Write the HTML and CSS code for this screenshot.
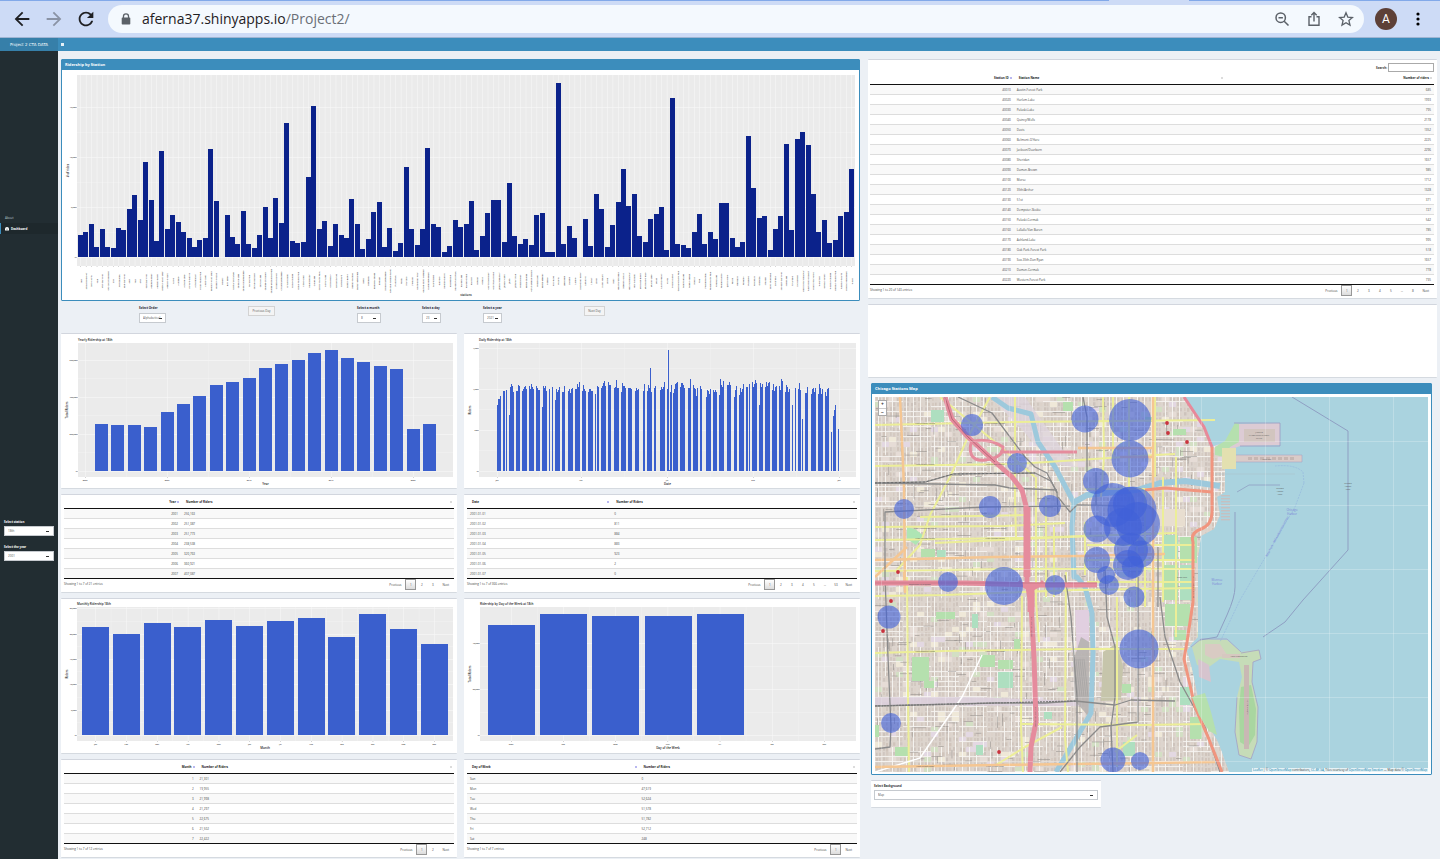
FILE: index.html
```html
<!DOCTYPE html>
<html lang="en">
<head>
  <meta charset="utf-8">
  <title>Project 2 CTA DATA</title>
  <link rel="stylesheet" href="styles.css">
</head>
<body>
  <header class="browser">
    <div class="tab-edge"><span></span></div>
    <div class="toolbar">
      <button class="nav-btn" aria-label="Back"><svg width="22" height="22" viewBox="0 0 24 24"><path d="M20 11H7.83l5.59-5.59L12 4l-8 8 8 8 1.41-1.41L7.83 13H20v-2z"/></svg></button>
      <button class="nav-btn off" aria-label="Forward"><svg width="22" height="22" viewBox="0 0 24 24"><path d="M4 11h12.17l-5.59-5.59L12 4l8 8-8 8-1.41-1.41L16.17 13H4v-2z"/></svg></button>
      <button class="nav-btn" aria-label="Reload"><svg width="22" height="22" viewBox="0 0 24 24"><path d="M17.65 6.35C16.2 4.9 14.21 4 12 4c-4.42 0-7.99 3.58-7.99 8s3.57 8 7.99 8c3.73 0 6.84-2.55 7.73-6h-2.08c-.82 2.33-3.04 4-5.65 4-3.31 0-6-2.69-6-6s2.69-6 6-6c1.66 0 3.14.69 4.22 1.78L13 11h7V4l-2.35 2.35z"/></svg></button>
      <div class="omnibox">
        <svg width="10" height="12" viewBox="0 0 10 12"><path d="M1.800 4.500V3.400a3.200 3.200 0 0 1 6.400 0v1.100H8.500a.8.800 0 0 1 .8.800v5.400a.8.800 0 0 1-.8.800h-7a.8.800 0 0 1-.8-.8V5.300a.8.800 0 0 1 .8-.8zM3.100 4.500h3.800V3.400a1.900 1.900 0 0 0-3.800 0z" fill="#5b6168"/></svg>
        <div class="url">aferna37.shinyapps.io<span>/Project2/</span></div>
        <button aria-label="Zoom"><svg width="16" height="16" viewBox="0 0 16 16" fill="none" stroke="#5b6168" stroke-width="1.500"><circle cx="6.700" cy="6.700" r="4.700"/><path d="M10.200 10.200l4.300 4.300M4.500 6.700h4.400"/></svg></button>
        <button aria-label="Share"><svg width="16" height="16" viewBox="0 0 16 16" fill="none" stroke="#5b6168" stroke-width="1.400"><path d="M5.500 5.700H3v8.600h10V5.700h-2.500M8 10.500V1.800M5.300 4.300L8 1.600l2.700 2.700"/></svg></button>
        <button aria-label="Bookmark"><svg width="16" height="16" viewBox="0 0 16 16" fill="none" stroke="#5b6168" stroke-width="1.300"><path d="M8 1.800l1.800 4.300 4.600.4-3.500 3 1.100 4.600L8 11.700l-4 2.400 1.100-4.600-3.500-3 4.600-.4z"/></svg></button>
      </div>
      <div class="avatar">A</div>
      <button class="dots" aria-label="Menu"><svg width="4" height="14" viewBox="0 0 4 14"><circle cx="2" cy="2" r="1.600"/><circle cx="2" cy="7" r="1.600"/><circle cx="2" cy="12" r="1.600"/></svg></button>
    </div>
  </header>

  <div class="navbar">
    <a class="logo" href="#">Project 2 CTA DATA</a>
    <a class="toggle" href="#" aria-label="Toggle navigation"></a>
  </div>

  <div class="wrapper">
    <aside class="sidebar">
      <ul class="menu">
        <li><a href="#">About</a></li>
        <li class="active"><a href="#"><svg width="4" height="4" viewBox="0 0 4 4"><path d="M0 3.500V2a2 2 0 0 1 4 0v1.500z" fill="#fff"/><path d="M2 3V1.500" stroke="#222d32" stroke-width=".5"/></svg>Dashboard</a></li>
      </ul>
      <div class="side-field">
        <label for="station">Select station</label>
        <select id="station"><option>18th</option></select>
      </div>
      <div class="side-field">
        <label for="sideYear">Select the year</label>
        <select id="sideYear"><option>2001</option></select>
      </div>
    </aside>

    <main class="content">
      <section class="left">
        <div class="box primary">
          <h3>Ridership by Station</h3>
          <svg class="chart" id="stationChart"></svg>
        </div>

        <div class="filters">
          <div class="field order">
            <label for="order">Select Order</label>
            <select id="order"><option>Alphabetical</option></select>
          </div>
          <div class="step prev"><button>Previous Day</button></div>
          <div class="field month">
            <label for="month">Select a month</label>
            <select id="month"><option>8</option></select>
          </div>
          <div class="field">
            <label for="day">Select a day</label>
            <select id="day"><option>23</option></select>
          </div>
          <div class="field">
            <label for="year">Select a year</label>
            <select id="year"><option>2021</option></select>
          </div>
          <div class="step"><button>Next Day</button></div>
        </div>

        <div class="pair">
          <div class="box"><svg class="chart" id="yearChart"></svg></div>
          <div class="box"><svg class="chart" id="dayChart"></svg></div>
          <div class="box table-box">
            <table id="yearTable">
              <colgroup><col class="c-year"><col></colgroup>
              <thead><tr><th class="num sorted">Year</th><th>Number of Riders</th></tr></thead>
              <tbody></tbody>
            </table>
            <div class="foot"><span>Showing 1 to 7 of 21 entries</span><nav data-pages="1 2 3"></nav></div>
          </div>
          <div class="box table-box">
            <table id="dayTable">
              <colgroup><col class="c-day"><col></colgroup>
              <thead><tr><th class="sorted">Date</th><th>Number of Riders</th></tr></thead>
              <tbody></tbody>
            </table>
            <div class="foot"><span>Showing 1 to 7 of 366 entries</span><nav data-pages="1 2 3 4 5 … 53"></nav></div>
          </div>
          <div class="box"><svg class="chart" id="monthChart"></svg></div>
          <div class="box"><svg class="chart" id="weekChart"></svg></div>
          <div class="box table-box">
            <table id="monthTable">
              <colgroup><col class="c-month"><col></colgroup>
              <thead><tr><th class="num sorted">Month</th><th>Number of Riders</th></tr></thead>
              <tbody></tbody>
            </table>
            <div class="foot"><span>Showing 1 to 7 of 12 entries</span><nav data-pages="1 2"></nav></div>
          </div>
          <div class="box table-box">
            <table id="weekTable">
              <colgroup><col class="c-week"><col></colgroup>
              <thead><tr><th class="sorted">Day of Week</th><th>Number of Riders</th></tr></thead>
              <tbody></tbody>
            </table>
            <div class="foot"><span>Showing 1 to 7 of 7 entries</span><nav data-pages="1"></nav></div>
          </div>
        </div>
      </section>

      <section class="right">
        <div class="box stations">
          <div class="search"><label for="search">Search:</label><input type="search" id="search"></div>
          <table id="stationTable">
            <colgroup><col class="c-id"><col class="c-name"><col></colgroup>
            <thead><tr><th class="num sorted">Station ID</th><th>Station Name</th><th class="num">Number of riders</th></tr></thead>
            <tbody></tbody>
          </table>
          <div class="foot"><span>Showing 1 to 20 of 143 entries</span><nav data-pages="1 2 3 4 5 … 8"></nav></div>
        </div>
        <div class="box blank"></div>
        <div class="map-col">
          <div class="box primary">
            <h3>Chicago Stations Map</h3>
            <div class="map">
              <svg id="map" viewBox="0 0 553 375"></svg>
              <div class="zoom"><button aria-label="Zoom in">+</button><button aria-label="Zoom out">−</button></div>
              <div class="credit"><a href="#">Leaflet</a> | © <a href="#">OpenStreetMap</a> contributors, <a href="#">CC-BY-SA</a>, Tiles courtesy of <a href="#">OpenStreetMap Sweden</a> — Map data © <a href="#">OpenStreetMap</a></div>
            </div>
          </div>
          <div class="box background">
            <label for="background">Select Background</label>
            <select id="background"><option>Map</option></select>
          </div>
        </div>
      </section>
    </main>
  </div>
  <script src="app.js"></script>
</body>
</html>
```
FILE: styles.css
```css
* { box-sizing: border-box; }
body {
  margin: 0;
  min-height: 100vh;
  display: flex;
  flex-direction: column;
  background: #ecf0f5;
  color: #333;
  font: 3px/4px "Open Sans", sans-serif;
}
button, input, select { font: inherit; color: inherit; margin: 0; padding: 0; border: 0; background: none; }
a { color: inherit; text-decoration: none; }
svg { display: block; }

/* browser bar */
.browser { background: #cddbf6; border-bottom: 1px solid #9fb5d3; }
.tab-edge { height: 1px; background: #82a9e9; display: flex; }
.tab-edge span { width: 80px; margin-left: 77%; background: #cddbf6; }
.toolbar { display: flex; align-items: center; height: 36px; padding: 0 10px 0 6px; }
.nav-btn { width: 32px; height: 32px; display: flex; align-items: center; justify-content: center; fill: #1f2023; }
.nav-btn.off { fill: #8a93a5; }
.omnibox {
  flex: 1;
  display: flex;
  align-items: center;
  height: 28px;
  margin-left: 6px;
  padding: 0 2px 0 13px;
  border-radius: 14px;
  background: #f4f9fe;
}
.url { flex: 1; margin-left: 11px; color: #1f2023; font: 14px/20px "Open Sans", sans-serif; }
.url span { color: #6a6f76; }
.omnibox button { width: 32px; height: 28px; display: flex; align-items: center; justify-content: center; }
.avatar {
  width: 22px;
  height: 22px;
  margin: 0 9px 0 11px;
  border-radius: 50%;
  background: #5d4037;
  color: #fff;
  font: 12px/22px Roboto, sans-serif;
  text-align: center;
}
.dots { width: 24px; height: 24px; display: flex; align-items: center; justify-content: center; }

/* dashboard header */
.navbar { display: flex; height: 13px; background: #3c8dbc; }
.logo { width: 58px; background: #367fa9; color: #fff; font: 4px/13px "DejaVu Sans", sans-serif; text-align: center; }
.toggle { width: 3px; height: 3px; margin: 5px 3px; background: #e4f0f7; }

.wrapper { flex: 1; display: flex; }
.sidebar { width: 58px; background: #222d32; color: #fff; }
.menu { list-style: none; margin: 0; padding: 161px 0 286px; }
.menu a { display: flex; align-items: center; gap: 2px; height: 11px; padding-left: 4px; border-left: 1px solid transparent; color: #b8c7ce; }
.menu .active a { background: #1e282c; border-left-color: #3c8dbc; color: #fff; font-weight: bold; }
.side-field { padding: 0 4px; margin-bottom: 9px; }
label { display: block; font-weight: bold; white-space: nowrap; }
.side-field label { margin-bottom: 2px; }

select {
  display: block;
  height: 10px;
  padding: 0 3px;
  border: 1px solid #c6cacf;
  background: #fff linear-gradient(#333, #333) no-repeat right 4px center / 3px 1px;
  color: #555;
  font-size: 3px;
  appearance: none;
}
.side-field select { width: 100%; }

/* layout */
.content {
  flex: 1;
  display: grid;
  grid-template-columns: 799fr 569fr;
  gap: 8px;
  align-items: start;
  padding: 8px 3px 1px;
}
.left, .right { min-width: 0; }
.pair { display: grid; grid-template-columns: 1fr 1fr; gap: 5px 7px; }
.box { background: #fff; border-top: 1px solid #d2d6de; border-bottom: 1px solid #d5dae0; border-radius: 1px; }
.box.primary { border: 1px solid #3c8dbc; }
.box h3 { margin: 0; padding-left: 3px; background: #3c8dbc; color: #fff; font: bold 4px/10px "Open Sans", sans-serif; }

.filters { display: grid; grid-template-columns: 109fr 109fr 65fr 61fr 101fr 276fr; height: 32px; padding: 5px 0 0 78px; }
.field label { margin-bottom: 3px; color: #223; }
.field select { width: 19px; background-position: right 3px center; }
.field.order select { width: 27px; background-position: right 3px center; }
.field.month select { width: 24px; background-position: right 4px center; }
.step button { width: 21px; height: 10px; border: 1px solid #d3d3d3; background: #f4f4f4; color: #555; }
.step.prev button { width: 27px; }

/* charts */
.chart { width: 100%; height: auto; }
.chart text { font-family: "Open Sans", sans-serif; fill: #333; }
.chart .tick { font-size: 2px; font-weight: 600; }
.chart .axis { font-size: 3px; font-weight: 600; fill: #222; }

/* tables */
.table-box { padding: 1px 3px 0; }
table { width: 100%; border-spacing: 0; table-layout: fixed; }
th { height: 13px; padding: 0 5px; border-bottom: 1px solid #111; color: #222; line-height: 4px; text-align: left; position: relative; }
th::after { content: ""; position: absolute; right: 2px; top: 5px; width: 2px; height: 2px; background: #dcdcdc; }
th.sorted::after { background: #b9b8f0; }
td { height: 10px; padding: 0 3px; border-bottom: 1px solid #ddd; line-height: 4px; color: #444; }
.num { text-align: right; }
tbody tr:nth-child(odd) { background: #f9f9f9; }
tbody tr:last-child td { border-bottom-color: #111; }
.c-year { width: 30%; }
.c-month { width: 34%; }
.c-day { width: 37%; }
.c-week { width: 44%; }
.c-id { width: 25.5%; }
.c-name { width: 37.5%; }
.foot { display: flex; justify-content: space-between; height: 13px; color: #444; }
.foot span { padding-top: 3px; }
nav { display: flex; }
nav button { min-width: 11px; height: 11px; padding: 0 4px; }
nav .num-btn { padding: 0; }
nav .current { border: 1px solid #979797; background: linear-gradient(#fff, #dcdcdc); }

.stations { padding: 3px 3px 0 2px; }
.stations nav, .table-box nav { margin-right: 1px; }
.search { display: flex; justify-content: flex-end; align-items: center; gap: 1px; height: 9px; }
.search input { width: 46px; height: 9px; border: 1px solid #aaa; background: #fff; }
.blank { height: 74px; margin: 5px 0; }

/* map */
.map-col { padding: 0 5px 0 3px; }
.map { position: relative; margin: 3px 3px 2px; }
.map > svg { width: 100%; height: auto; }
.zoom { position: absolute; left: 3px; top: 3px; border: 1px solid #aaa; background: #fff; }
.zoom button { display: block; width: 7px; height: 7px; font: bold 5px/7px "Open Sans", sans-serif; text-align: center; }
.zoom button + button { border-top: 1px solid #ccc; }
.credit { position: absolute; right: 0; bottom: 0; padding: 0 1px; background: rgba(255, 255, 255, .7); white-space: nowrap; }
.credit a { color: #0078a8; }
#map text { font: 2px "Open Sans", sans-serif; fill: #555; }
#map .lake { font-size: 3px; fill: #7c86d8; }
.background { width: 41%; height: 28px; margin-top: 5px; padding: 3px; }
.background label { margin-bottom: 2px; }
.background select { width: 100%; }
```
FILE: app.js
```js
function el(tag, attrs, text) {
  const node = document.createElementNS("http://www.w3.org/2000/svg", tag);
  for (const key in attrs) node.setAttribute(key, attrs[key]);
  if (text !== undefined) node.textContent = text;
  return node;
}

function rect(svg, x, y, width, height, fill) {
  svg.appendChild(el("rect", { x, y, width, height, fill }));
}

// panel = [x, y, w, h], xTicks / yTicks = [[position, label], ...]
function drawChart(id, c) {
  const svg = document.getElementById(id);
  const [px, py, pw, ph] = c.panel;
  svg.setAttribute("viewBox", `0 0 ${c.width} ${c.height}`);
  rect(svg, px, py, pw, ph, "#ebebeb");
  c.yTicks.forEach(([y, label], i) => {
    rect(svg, px, y, pw, 0.5, "#fafafa");
    if (i) rect(svg, px, (y + c.yTicks[i - 1][0]) / 2, pw, 0.3, "#f8f8f8");
    rect(svg, px - 1, y, 1, 0.5, "#999");
    svg.appendChild(el("text", { class: "tick", x: px - 1, y: y + 1, "text-anchor": "end" }, label));
  });
  c.xTicks.forEach(([x, label], i) => {
    rect(svg, x, py, 0.5, ph, "#f8f8f8");
    if (i && !c.vertical) rect(svg, (x + c.xTicks[i - 1][0]) / 2, py, 0.3, ph, "#f5f5f5");
    rect(svg, x, py + ph, 0.5, 1, "#aaa");
    const t = el("text", { class: "tick", x, y: py + ph + 4, "text-anchor": "middle" }, label);
    if (c.vertical) {
      t.setAttribute("y", 211);
      t.setAttribute("transform", `rotate(-90 ${x} 211)`);
      t.setAttribute("dy", 1);
    }
    svg.appendChild(t);
  });
  c.bars.forEach(([x, h]) => rect(svg, x, c.base - h, c.barWidth, h, c.fill || "#3a5fcd"));
  const midX = px + pw / 2;
  const midY = py + ph / 2;
  if (c.title) svg.appendChild(el("text", { class: "axis", x: px, y: py - 2 }, c.title));
  svg.appendChild(el("text", { class: "axis", x: midX, y: c.labelY, "text-anchor": "middle" }, c.xLabel));
  svg.appendChild(el("text", { class: "axis", x: 7, y: midY, "text-anchor": "middle", transform: `rotate(-90 7 ${midY})` }, c.yLabel));
}

const stationNames = `18th,35-Bronzeville-IIT,35th/Archer,43rd,47th-Dan Ryan,47th-South Elevated,51st,54th/Cermak,63rd-Dan Ryan,69th,79th,87th,95th/Dan Ryan,Adams/Wabash,Addison-Brown,Addison-North Main,Addison-O'Hare,Argyle,Armitage,Ashland-Lake,Ashland-Orange,Ashland/63rd,Austin-Forest Park,Austin-Lake,Belmont-North Main,Belmont-O'Hare,Berwyn,Bryn Mawr,California-Cermak,California-Lake,California/Milwaukee,Central Park,Central-Evanston,Central-Lake,Cermak-Chinatown,Cermak-McCormick Place,Chicago/Franklin,Chicago/Milwaukee,Chicago/State,Cicero-Cermak,Cicero-Forest Park,Cicero-Lake,Clark/Division,Clark/Lake,Clinton-Forest Park,Clinton-Lake,Conservatory,Cottage Grove,Cumberland,Damen-Brown,Damen-Cermak,Damen/Milwaukee,Davis,Dempster,Dempster-Skokie,Diversey,Division/Milwaukee,East 63rd-Cottage Grove,Forest Park,Foster,Francisco,Fullerton,Garfield-Dan Ryan,Garfield-South Elevated,Grand/Milwaukee,Grand/State,Granville,Halsted-Orange,Halsted/63rd,Harlem-Forest Park,Harlem-Lake,Harlem-O'Hare,Harrison,Howard,Indiana,Irving Park-Brown,Irving Park-O'Hare,Jackson/Dearborn,Jackson/State,Jarvis,Jefferson Park,Kedzie-Brown,Kedzie-Cermak,Illinois Medical District,Kedzie-Lake,Kedzie-Midway,Kimball,King Drive,Kostner,Lake/State,Laramie,LaSalle,LaSalle/Van Buren,Lawrence,Library,Linden,Logan Square,Loyola,Main,Merchandise Mart,Midway Airport,Monroe/Dearborn,Monroe/State,Montrose-Brown,Montrose-O'Hare,Morgan-Lake,Morse,North/Clybourn,Noyes,O'Hare Airport,Oak Park-Forest Park,Oak Park-Lake,Oakton-Skokie,Paulina,Polk,Pulaski-Cermak,Pulaski-Forest Park,Pulaski-Lake,Pulaski-Orange,Quincy/Wells,Racine,Ridgeland,Rockwell,Roosevelt,Rosemont,Sedgwick,Sheridan,South Boulevard,Southport,Sox-35th-Dan Ryan,State/Lake,Thorndale,UIC-Halsted,Washington/Dearborn,Washington/Wabash,Washington/Wells,Wellington,Western-Brown,Western-Cermak,Western-Forest Park,Western-Orange,Western/Milwaukee,Wilson`.split(",");

// hundreds of riders
const stationRides = [
  22, 25, 33, 10, 28, 10, 9, 29, 27, 48, 62, 37, 95, 57, 16, 106, 28, 42, 35, 25,
  19, 10, 17, 19, 108, 56, 0, 42, 20, 13, 46, 13, 9, 22, 50, 19, 59, 34, 134, 16,
  14, 15, 80, 151, 28, 36, 11, 33, 22, 19, 58, 33, 8, 18, 45, 55, 10, 29, 6, 14,
  90, 28, 12, 28, 109, 33, 30, 5, 11, 37, 30, 33, 56, 7, 21, 44, 57, 57, 15, 74,
  21, 13, 18, 12, 42, 44, 5, 5, 174, 13, 31, 19, 0, 38, 11, 63, 48, 10, 32, 55,
  88, 51, 63, 21, 15, 38, 43, 50, 7, 159, 13, 12, 9, 25, 43, 13, 25, 18, 54, 54,
  19, 10, 15, 121, 69, 39, 41, 7, 28, 41, 113, 27, 118, 125, 112, 63, 25, 37, 14, 17,
  41, 45, 88
];
const step = 771 / 142;
drawChart("stationChart", {
  width: 797, height: 230, panel: [15, 5, 778, 191], base: 187, barWidth: 5, fill: "#0b228b", vertical: true,
  bars: stationRides.map((v, i) => [Math.round(16 + i * step), v]),
  xTicks: stationRides.map((v, i) => [18.5 + i * step, stationNames[i] || ""]),
  yTicks: [[187, "0"], [137, "5,000"], [87, "10,000"], [37, "15,000"]],
  xLabel: "stations", yLabel: "# of rides", labelY: 226
});

drawChart("yearChart", {
  width: 396, height: 154, panel: [17, 9, 375, 134], base: 137, barWidth: 13,
  bars: [47, 46, 46, 44, 59, 67, 75, 86, 89, 93, 103, 107, 111, 118, 121, 113, 109, 105, 102, 42, 47]
    .map((v, i) => [Math.round(34 + i * 16.4), v]),
  xTicks: [[24, "2000"], [106, "2005"], [188, "2010"], [270, "2015"], [352, "2020"]],
  yTicks: [[137, "0"], [100, "200,000"], [63, "400,000"], [26, "600,000"]],
  title: "Yearly Ridership at 18th", xLabel: "Year", yLabel: "Total Riders", labelY: 151
});

// runs of service days: first column, then one height per day
const dayRuns = [
  [33, 66, 72, 72, 75], [39, 80, 80], [42, 81], [45, 56, 84, 87, 85, 79], [52, 80, 80, 86, 85],
  [58, 80, 82, 84, 85, 82], [65, 85, 82, 87, 84, 82], [72, 85, 83, 81, 81], [78, 64, 85, 83, 85, 80],
  [85, 82], [88, 84], [91, 71, 82, 79, 81, 84], [98, 79, 79, 85], [104, 80, 82, 78, 82, 83],
  [111, 82, 82, 87, 84, 89], [118, 80, 86, 82, 80], [124, 79, 82, 82, 80, 80], [131, 77], [133, 85, 84],
  [137, 83, 85, 88, 90, 85], [144, 89, 86, 86], [150, 83, 84, 91, 83, 83], [157, 79, 88, 85, 85, 83],
  [164, 83, 83, 83, 82], [171, 80, 83, 81, 82], [179, 80, 87], [183, 80, 86, 83, 103, 79], [190, 83, 85],
  [196, 81, 84, 82, 84, 89], [203, 82, 121, 1, 79, 86], [209, 78, 82, 87, 88, 89], [216, 84, 88, 88, 86, 83],
  [224, 83, 83, 92], [229, 86, 83, 82, 75, 83], [236, 85, 82], [242, 74, 81, 80, 77, 82], [249, 81, 79, 81, 79],
  [255, 76, 92, 86, 84, 90], [263, 86, 86, 89, 86], [270, 74, 81, 85], [275, 76, 83, 79, 82, 87], [282, 84, 84],
  [285, 87], [288, 89, 84, 87, 91, 88], [295, 66, 88, 84, 87], [301, 84, 89, 85, 88, 89], [308, 81, 87, 80, 84, 85],
  [315, 85, 81, 92, 90], [321, 79, 86, 84, 79, 82], [328, 66], [331, 83], [334, 82, 88, 81], [338, 52],
  [341, 78, 78, 84], [347, 77, 82, 83, 79, 83], [354, 77, 87, 83, 77, 82], [361, 79, 75, 82, 83], [367, 39],
  [369, 55, 61, 66], [374, 42]
];
drawChart("dayChart", {
  width: 396, height: 154, panel: [15, 9, 377, 134], base: 137, barWidth: 1,
  bars: dayRuns.flatMap(([x, ...days]) => days.map((v, i) => [x + i, v])),
  xTicks: [[33, "Jan"], [117, "Apr"], [203, "Jul"], [289, "Oct"], [375, "Jan"]],
  yTicks: [[137, "0"], [96, "500"], [55, "1,000"], [14, "1,500"]],
  title: "Daily Ridership at 18th", xLabel: "Date", yLabel: "Riders", labelY: 151
});

const months = ["Jan", "Feb", "Mar", "Apr", "May", "Jun", "Jul", "Aug", "Sep", "Oct", "Nov", "Dec"];
drawChart("monthChart", {
  width: 396, height: 154, panel: [16, 8, 376, 134], base: 136, barWidth: 27,
  bars: [108, 101, 112, 108, 115, 109, 114, 117, 98, 121, 106, 91].map((v, i) => [Math.round(21 + i * 30.8), v]),
  xTicks: months.map((m, i) => [34.5 + i * 30.8, m]),
  yTicks: [[136, "0"], [111, "5,000"], [85, "10,000"], [60, "15,000"], [35, "20,000"], [9, "25,000"]],
  title: "Monthly Ridership 18th", xLabel: "Month", yLabel: "Riders", labelY: 150
});

drawChart("weekChart", {
  width: 396, height: 154, panel: [16, 8, 376, 134], base: 136, barWidth: 47,
  bars: [110, 121, 119, 119, 121].map((v, i) => [Math.round(24 + i * 52.2), v]),
  xTicks: ["Mon", "Tue", "Wed", "Thu", "Fri", "Sat", "Sun"].map((d, i) => [47 + i * 52.2, d]),
  yTicks: [[136, "0"], [90, "20,000"], [44, "40,000"]],
  title: "Ridership by Day of the Week at 18th", xLabel: "Day of the Week", yLabel: "Total Riders", labelY: 150
});

// tables
function fillTable(id, rows, right) {
  const body = document.querySelector(`#${id} tbody`);
  rows.forEach(row => {
    const tr = body.insertRow();
    row.forEach((value, i) => {
      const td = tr.insertCell();
      td.textContent = value;
      if (right.includes(i)) td.className = "num";
    });
  });
}
fillTable("yearTable", [[2001, "256,163"], [2002, "251,387"], [2003, "251,773"], [2004, "238,538"], [2005, "320,763"], [2006, "360,921"], [2007, "407,087"]], [0]);
fillTable("dayTable", [["2001-01-01", "0"], ["2001-01-02", "811"], ["2001-01-03", "884"], ["2001-01-04", "883"], ["2001-01-05", "923"], ["2001-01-06", "2"], ["2001-01-07", "0"]], []);
fillTable("monthTable", [[1, "21,301"], [2, "19,955"], [3, "21,998"], [4, "21,297"], [5, "22,675"], [6, "21,502"], [7, "22,422"]], [0]);
fillTable("weekTable", [["Sun", "0"], ["Mon", "47,619"], ["Tue", "52,624"], ["Wed", "51,578"], ["Thu", "51,782"], ["Fri", "52,712"], ["Sat", "248"]], []);
fillTable("stationTable", [
  [40010, "Austin-Forest Park", 685], [40020, "Harlem-Lake", 1993], [40030, "Pulaski-Lake", 795], [40040, "Quincy/Wells", 2178],
  [40050, "Davis", 1352], [40060, "Belmont-O'Hare", 2225], [40070, "Jackson/Dearborn", 2296], [40080, "Sheridan", 1657],
  [40090, "Damen-Brown", 985], [40100, "Morse", 1712], [40120, "35th/Archer", 1328], [40130, "51st", 371],
  [40140, "Dempster-Skokie", 727], [40150, "Pulaski-Cermak", 542], [40160, "LaSalle/Van Buren", 785], [40170, "Ashland-Lake", 995],
  [40180, "Oak Park-Forest Park", 518], [40190, "Sox-35th-Dan Ryan", 1657], [40210, "Damen-Cermak", 778], [40220, "Western-Forest Park", 735]
], [0, 2]);

document.querySelectorAll("nav").forEach(nav => {
  const add = (text, cls) => {
    const b = document.createElement("button");
    b.textContent = text;
    b.className = cls;
    nav.appendChild(b);
  };
  add("Previous", "");
  nav.dataset.pages.split(" ").forEach((p, i) => add(p, i ? "num-btn" : "num-btn current"));
  add("Next", "");
});

// map
const map = document.getElementById("map");
let seed = 7;
function rnd() {
  seed = (seed * 16807) % 2147483647;
  return seed / 2147483647;
}
function shape(d, fill, opacity) {
  map.appendChild(el("path", { d, fill, opacity: opacity || 1 }));
}
function line(d, stroke, width, dash) {
  map.appendChild(el("path", { d, fill: "none", stroke, "stroke-width": width, "stroke-dasharray": dash || "none", "stroke-linejoin": "round" }));
}
function label(x, y, text, cls, turn) {
  map.appendChild(el("text", { x, y, class: cls || "", "text-anchor": "middle", transform: `rotate(${turn || 0} ${x} ${y})` }, text));
}

const coast = "M0 0H309L329 30 337 50 342 48 350 46V95L342 100 345 118 339 132 326 139 323 160V240L317 246 312 254 316 268 325 310 334 330 343 345 354 375H0Z";
const defs = el("defs", {});
const clip = el("clipPath", { id: "land" });
clip.appendChild(el("path", { d: coast }));
defs.appendChild(clip);
map.appendChild(defs);

rect(map, 0, 0, 553, 375, "#aad3df");
shape(coast, "#ddd5ce");

// city blocks and small streets
const city = el("g", { "clip-path": "url(#land)" });
map.appendChild(city);
const blockColors = ["#d0c4bb", "#d5cac1", "#cdc3bc", "#d2c8c0", "#d0c6c0", "#dcd2ca"];
for (let x = 0; x < 360; x += 7) {
  for (let y = 0; y < 375; y += 5) {
    for (let n = 0; n < 2; n++) {
      rect(city, x + 1 + n * 3, y + rnd(), 1.5 + rnd(), 3 + rnd(), blockColors[Math.floor(rnd() * 6)]);
    }
    if (rnd() < 0.15) rect(city, x, y, 7, 5, ["#e6dcd6", "#e3d8e2", "#d3dfc4", "#efe8d8"][Math.floor(rnd() * 4)]);
  }
}
for (let x = 3; x < 355; x += 7) {
  for (let y = 0; y < 375; y += 25) if (rnd() < 0.62) rect(city, x, y, 0.9, 25 + rnd() * 8, "#f8f6f3");
}
for (let y = 4; y < 375; y += 5) {
  for (let x = 0; x < 355; x += 28) if (rnd() < 0.4) rect(city, x, y, 28, 0.8, "#f8f6f3");
}
for (let i = 0; i < 330; i++) {
  const up = rnd() < 0.4;
  rect(city, rnd() * 320, rnd() * 375, up ? 0.5 : 4 + rnd() * 10, up ? 4 + rnd() * 9 : 0.5, "#8d8885");
}

// parks, campuses, yards
[[56, 13, 13, 12], [188, 5, 10, 9], [46, 152, 14, 8], [62, 153, 9, 7], [37, 260, 17, 24], [61, 215, 19, 7], [97, 217, 6, 14],
 [105, 258, 15, 12], [123, 263, 15, 9], [123, 275, 15, 16], [139, 242, 6, 10], [49, 284, 10, 7], [101, 348, 7, 10],
 [0, 328, 4, 12], [298, 32, 13, 6], [289, 138, 14, 26], [305, 140, 17, 26], [289, 168, 14, 35], [305, 168, 12, 35], [290, 207, 25, 22],
 [299, 233, 12, 10], [169, 315, 8, 7], [247, 287, 9, 9], [270, 20, 9, 5], [305, 290, 10, 18], [315, 320, 12, 22], [20, 350, 14, 9], [248, 345, 12, 14]
].forEach(([x, y, w, h], i) => rect(city, x, y, w, h, i % 3 ? "#b5e0ae" : "#aedfc0"));
shape("M32 130L40 132 49 139 41 148 32 142Z", "#aee5b4");
shape("M115 0H150L200 70 185 68 160 48 145 30Z", "#ddd3dc", 0.8);
shape("M200 213H214V255L202 258Z", "#e1cfe0");
shape("M0 300H100L205 304V309L0 308Z", "#dccfdc", 0.9);
shape("M198 265L206 240 214 245V320L200 304Z", "#b6b1b0", 0.9);
shape("M228 255L242 246 248 270 246 303 226 304Z", "#c6c5ab");
shape("M271 112H310V129H271Z", "#e8ded0");

// river
line("M117 0L133 11 156 17 163 45 180 70 199 106 197 130 199 180 202 180 210 190 217 216 218 256 216 316 196 350 181 375", "#9dc9dc", 5);
line("M198 106L212 98 230 96 262 93 285 86 310 84 345 89", "#9dc9dc", 6);

// arterials
const yellow = "#ecee98";
["M0 28L140 25 340 23", "M0 69L140 67 280 58 300 57", "M45 120L150 118", "M0 130L130 129 190 126", "M0 143L150 141 300 136",
 "M60 146L215 139", "M0 174L135 172 320 172", "M0 199L70 198 200 193 320 191", "M0 256L70 254 200 252 310 252", "M147 327L265 328 330 327",
 "M140 0V100L141 140", "M161 80V205L164 245", "M171 100V200", "M179 130V200", "M228 0L229 60 226 100", "M238 0V60", "M280 0V80", "M301 60V240",
 "M147 199L146 330 148 375", "M191 175L190 340 193 375", "M32 180L33 300 34 375", "M242 200V370", "M210 178V125", "M254 0V95",
 "M20 175L45 148 55 118 75 80 93 40 115 0", "M65 0L98 27 120 45 160 80", "M210 92H290", "M212 148H320M212 163H320M212 185H318",
 "M121 368L150 350 187 330", "M240 355L262 338", "M288 80V205M270 92V210M262 140V210"
].forEach(d => line(d, yellow, 2));
line("M0 375L45 361 87 300 107 258", "#fff", 1.5);
["M25 0L29 90 30 195 29 175", "M0 163L120 160 205 159 290 157", "M0 180L32 150", "M0 370L120 368 278 366 340 365",
 "M278 0V375", "M203 51H277", "M245 60H278"].forEach(d => line(d, "#f5c692", 2.5));

// railways
["M0 86L50 85 78 77 160 76 176 84 182 95 183 118", "M83 0L117 16 150 60 160 70 172 76 182 96", "M0 86L120 88 135 91 182 93",
 "M0 309L120 306 170 306 200 304 240 308 256 303 300 304", "M183 100L195 115 202 108 250 109", "M208 0L212 20V75",
 "M190 178L196 220 202 300 202 375", "M230 173L232 220 240 250 240 300 236 330 238 375", "M185 375L205 350 225 330 263 325V180",
 "M285 200L290 240 305 285 330 330 345 375", "M10 180L13 260 16 330 15 350 0 352", "M10 180V115L110 110 195 109",
 "M221 75V109", "M283 150V210"].forEach(d => line(d, "#8a8a8a", 1.3));
line("M0 86L50 85 78 77 160 76", "#555", 0.6, "2 2");
line("M0 309L120 306 200 304", "#777", 1.2, "2 1");
for (let i = 0; i < 6; i++) line(`M${199 + i * 2} 262L${203 + i * 2} 300`, "#9a9a9a", 0.5);

// expressways
const pink = "#e58c9d";
line("M70 0L77 22 93 40 120 65 137 80 147 93 152 113 152 185 156 207 159 260 161 325 156 350 155 375", pink, 5);
line("M152 110V180M156 188V215", pink, 7);
line("M0 186L90 186 125 187 165 188 222 188", pink, 5);
line("M125 55H202", pink, 3);
line("M96 45Q92 65 110 63T128 50Q112 40 96 45", pink, 3);
line("M144 184Q156 200 168 184", pink, 3);
line("M70 0L77 22 93 40 120 65", "#b76577", 1);
line("M0 186H222", "#bd6b7d", 0.6);
line("M309 0L329 30 337 50", "#e7899a", 3);
line("M337 50V115Q337 128 326 132T318 145V205L312 245 309 262 320 310 333 340 347 375", "#f0957f", 3);
line("M270 93L290 91 337 95", "#f0957f", 3);

// harbour and lake front
shape("M349 55L355 40 360 27 405 26V48L365 49 349 55Z", "#dccbd4");
shape("M340 50L350 44 360 26 364 27V45L355 50 350 60 340 58Z", "#b5e0ae");
rect(map, 369, 32, 31, 13, "#d2c5bf");
line("M359 26H405V49H365", "#9b9bc0", 0.8);
rect(map, 361, 58, 66, 7, "#dacbc8");
line("M361 58H427V65H361", "#a5a5c8", 0.6);
for (let i = 0; i < 8; i++) rect(map, 373 + i * 6, 60, 4, 3, "#c6b6b2");
rect(map, 347, 51, 14, 21, "#e3e0b0");
for (let i = 0; i < 9; i++) rect(map, 346, 98 + i * 3, 9, 1.4, "#c5c0c0");
// museum campus and Northerly Island
shape("M317 250L326 242 352 243 366 255 384 253 386 262 378 265 377 285 383 310 382 345 376 362 364 358 360 335 362 300 367 280 364 265 345 262 334 270 322 268Z", "#c6dcb8");
shape("M366 290L376 288 381 312 380 338 373 350 365 345 364 310Z", "#a9d6a0");
shape("M330 247L345 247 352 258 338 262 330 258Z", "#d9cbc3");
rect(map, 347, 257, 18, 4, "#d6c8c0");
rect(map, 369, 268, 5, 84, "#c9b8b4");
line("M366 256L384 253 386 262 378 265 377 285 383 310 382 345 376 362 364 358 360 335 362 300", "#a098c4", 0.7);
line("M316 250L326 242H352L366 255", "#a59cc8", 0.7);
shape("M317 300L330 296 336 315 342 338 334 334 324 318Z", "#b5e0ae");
shape("M323 262L334 268 336 285 324 280Z", "#d6c4ce");

const reef = "#8f9fc3";
line("M417 0L473 34V153L428 203 410 225 388 240", reef, 1);
line("M360 115V190Q360 200 352 218L342 240 325 243", reef, 1);
line("M362 95L374 88 405 88", reef, 0.8);
line("M340 77H420", "#a9bcc4", 0.5);
line("M429 86L428 75Q420 67 400 69M429 86L420 110 365 203 345 245", "#92b4dd", 0.6, "2 1");

// tile seams
[6, 70, 134, 198, 262, 326, 390, 454, 518].forEach(x => rect(map, x, 0, 0.5, 375, "rgba(255,255,255,.45)"));
[44, 108, 172, 236, 300, 364].forEach(y => rect(map, 0, y, 553, 0.5, "rgba(255,255,255,.45)"));

label(384, 36, "JARDINE");
label(384, 39, "WATER PURIFICATION");
label(384, 42, "PLANT");
label(392, 63, "Navy Pier");
label(405, 92, "Chicago");
label(405, 95, "Harbor");
label(405, 98, "Light");
label(473, 87, "Chicago");
label(473, 90, "Harbor");
label(473, 93, "Light");
label(417, 114, "Chicago", "lake");
label(417, 118, "Harbor", "lake");
label(342, 184, "Monroe", "lake");
label(342, 188, "Harbor", "lake");
label(403, 140, "New York - Milwaukee Waterway", "lake", -62);
label(307, 181, "Grant Park");
label(364, 260, "Adler Planetarium");
label(372, 310, "Northerly Island", "", 90);
["West Washington Street", "West Madison Street", "West Roosevelt Road", "West Cermak Road", "West Chicago Avenue", "West Grand Avenue"].forEach((t, i) => {
  const y = [132, 142, 255, 370, 27, 68][i];
  label(50, y, t);
  label(120, y, t);
});
label(156, 230, "Dan Ryan Expressway", "", 90);
label(160, 320, "Dan Ryan Expressway", "", 90);
label(45, 188, "Eisenhower Expressway");
label(318, 190, "South Lake Shore Drive", "", 90);

[[23, 175], [292, 26], [293, 36], [312, 45], [16, 204], [8, 234], [124, 355]].forEach(([cx, cy]) => {
  map.appendChild(el("circle", { cx, cy, r: 1.9, fill: "#c9333e" }));
});

// station markers: x, y, radius
[[97, 28, 11], [142, 66, 10], [210, 22, 13.5], [255, 23, 21], [255, 62, 18.5], [221, 84, 13], [29, 112, 10], [115, 110, 11],
 [175, 109, 11], [238, 108, 22], [257, 114, 24.5], [255, 107, 17], [263, 127, 22], [222, 132, 13.5], [248, 130, 19], [222, 163, 13],
 [256, 153, 17], [266, 157, 13.5], [253, 168, 15], [258, 170, 11], [234, 188, 10], [14, 220, 11.5], [73, 185, 10], [129, 189, 19],
 [180, 188, 10], [259, 200, 10.5], [264, 252, 19.5], [16, 326, 10], [238, 363, 12.5], [265, 364, 9], [231, 178, 9]
].forEach(([cx, cy, r]) => {
  map.appendChild(el("circle", { cx, cy, r, fill: "#4161d8", opacity: 0.62 }));
});
```
